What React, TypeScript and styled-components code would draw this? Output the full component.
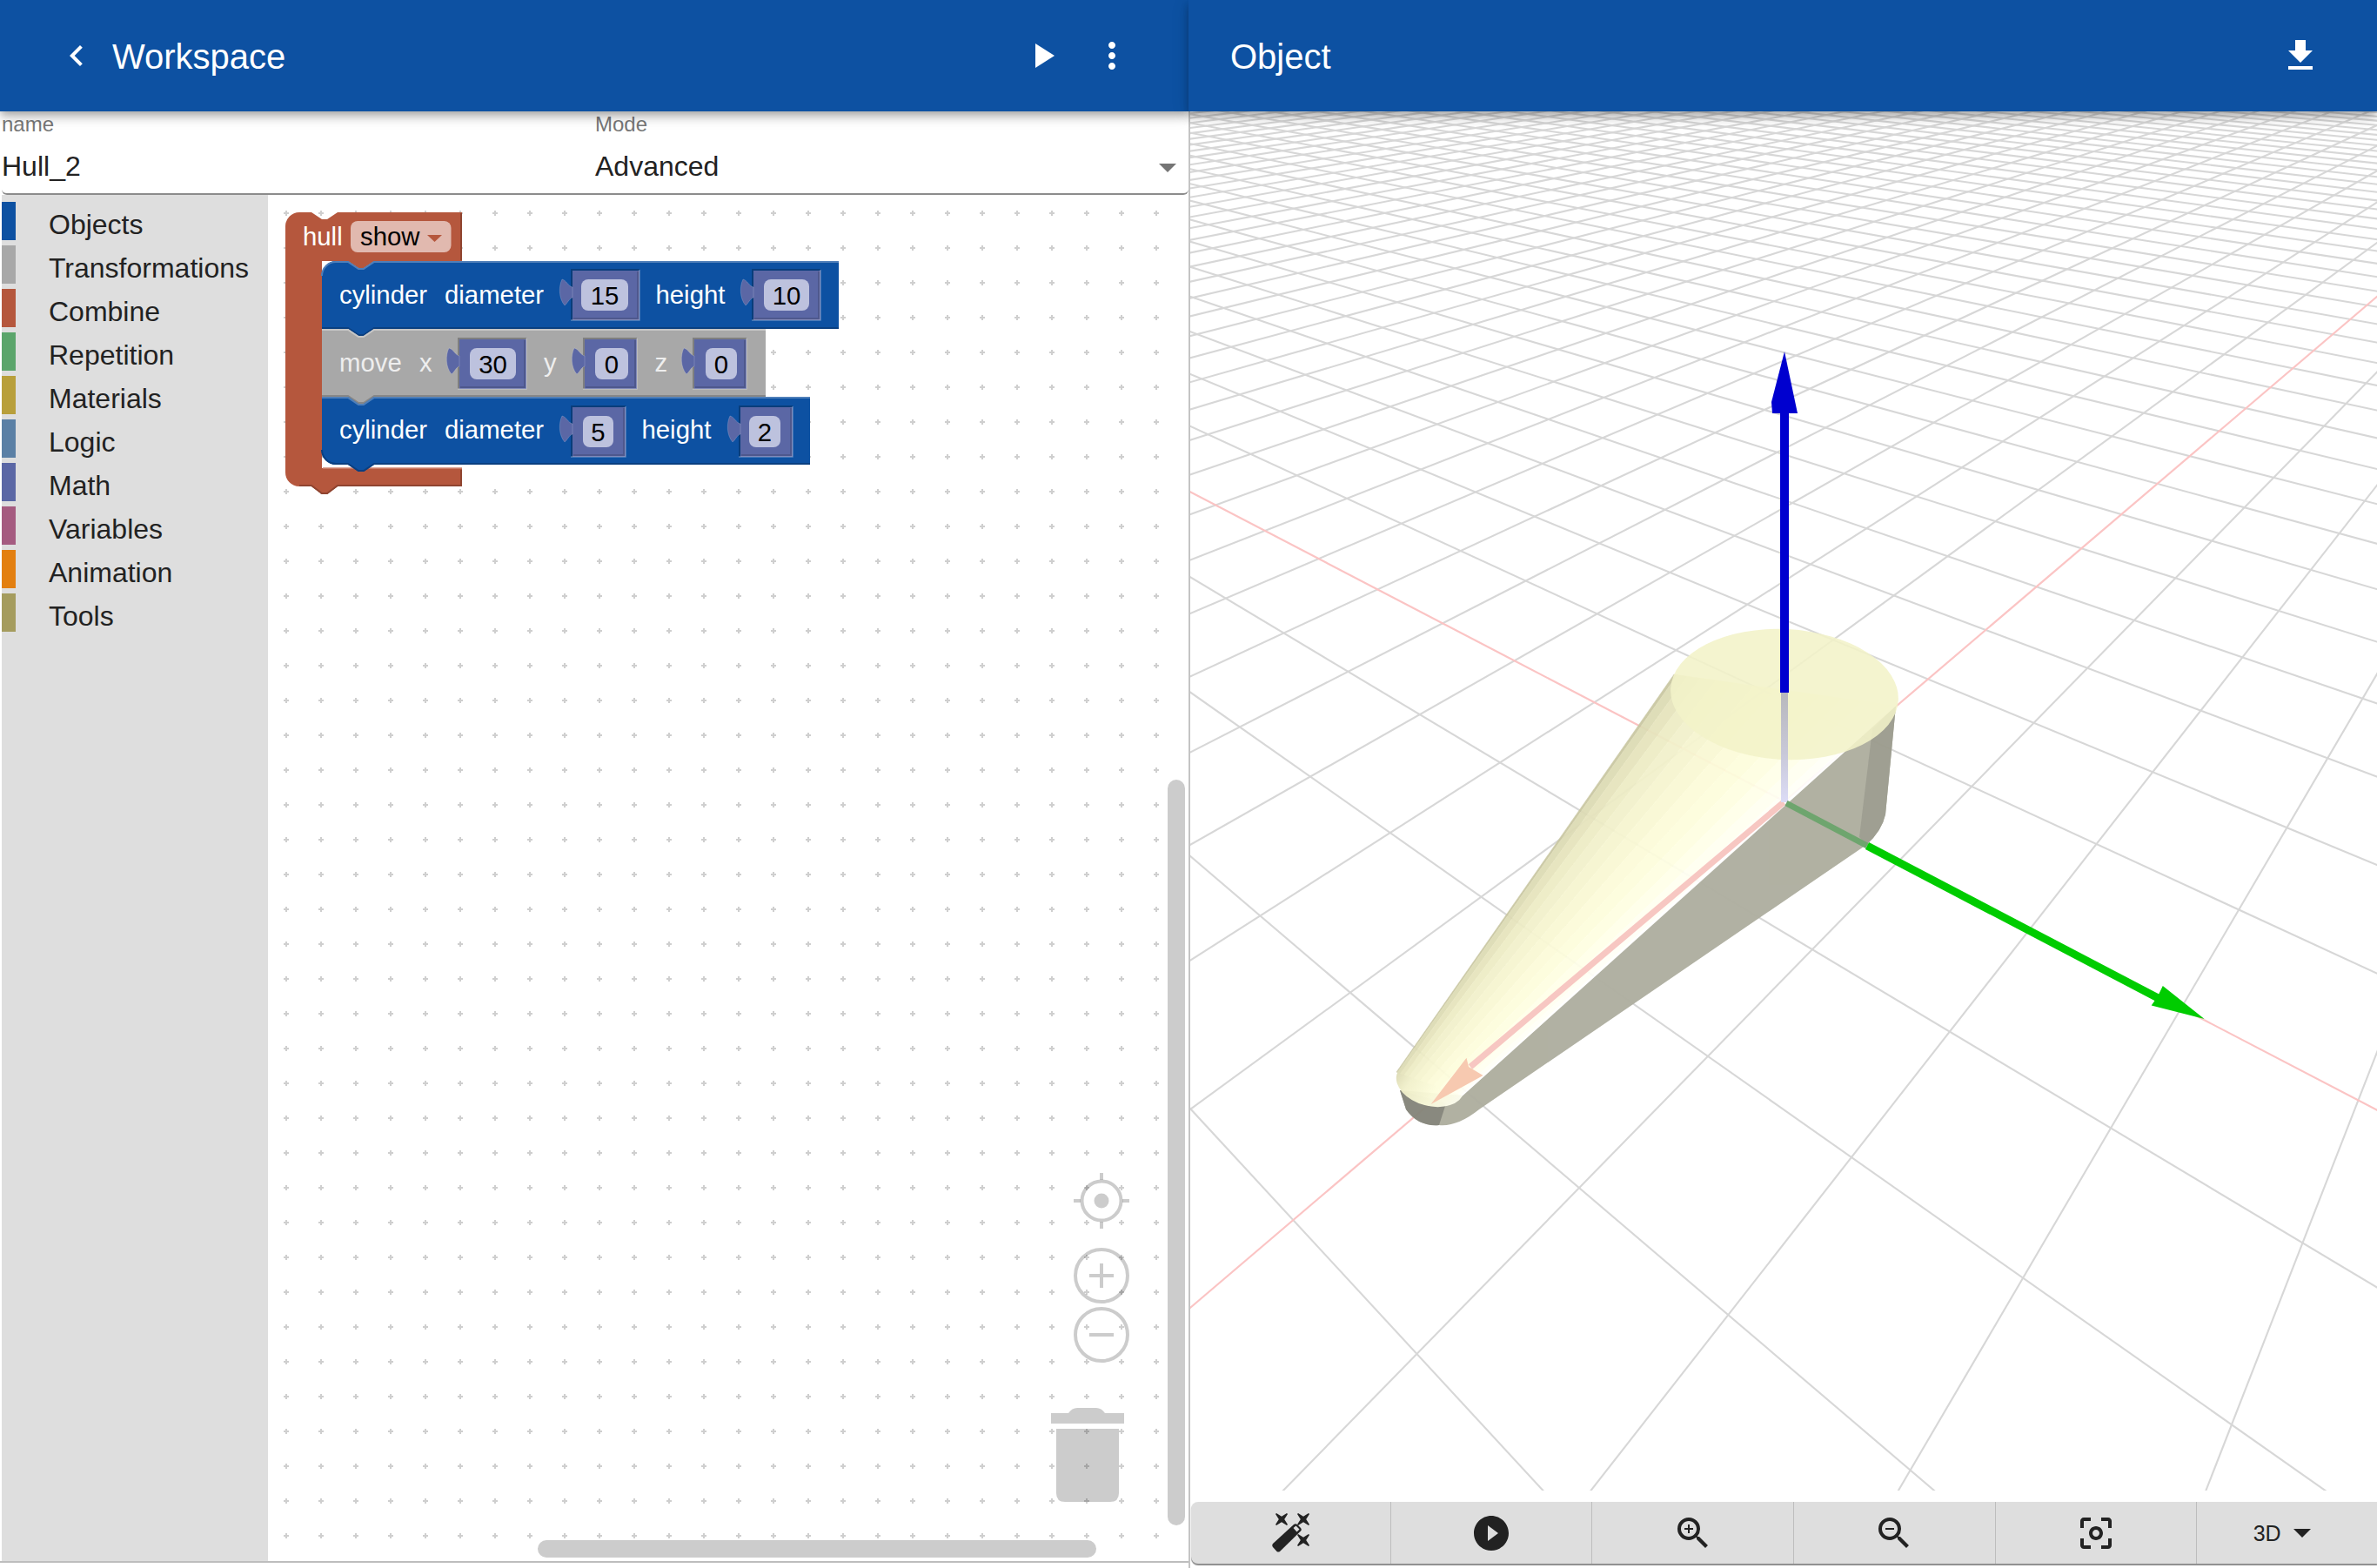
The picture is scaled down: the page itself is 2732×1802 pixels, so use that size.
import React from "react";
import styled, { createGlobalStyle } from "styled-components";
import {
  MdChevronLeft,
  MdPlayArrow,
  MdMoreVert,
  MdFileDownload,
  MdPlayCircleFilled,
  MdZoomIn,
  MdZoomOut,
  MdCenterFocusWeak,
} from "react-icons/md";

const FONT = `"Liberation Sans", Arial, sans-serif`;
const BLUE = "#0d51a2";

const Global = createGlobalStyle`
  html, body { margin: 0; padding: 0; background: #fff; overflow: hidden; }
  body { font-family: ${FONT}; }
  * { box-sizing: border-box; }
`;

const Page = styled.div`
  width: 2732px;
  height: 1802px;
  display: grid;
  grid-template-columns: 1366px 1366px;
  background: #fff;
`;

/* ---------- Left panel ---------- */
const LeftPanel = styled.section`
  height: 1796px;
  display: flex;
  flex-direction: column;
  border-bottom: 2px solid #bdbdbd;
  min-width: 0;
`;

const AppBar = styled.header<{ $z: number; $left: number; $right: number }>`
  position: relative;
  z-index: ${(p) => p.$z};
  flex: none;
  height: 128px;
  display: flex;
  align-items: center;
  padding: 0 ${(p) => p.$right}px 0 ${(p) => p.$left}px;
  background: ${BLUE};
  color: #fff;
  box-shadow: 0 4px 8px -2px rgba(0, 0, 0, 0.2), 0 8px 10px 0 rgba(0, 0, 0, 0.14),
    0 2px 20px 0 rgba(0, 0, 0, 0.12);
`;

const BarTitle = styled.h1<{ $gap?: number }>`
  flex: 1;
  margin: 2px 0 0 ${(p) => p.$gap ?? 0}px;
  font: 400 40px/48px ${FONT};
`;

const BarIcon = styled.span<{ $gap?: number }>`
  display: flex;
  width: 48px;
  height: 48px;
  margin-left: ${(p) => p.$gap ?? 0}px;
  svg { width: 48px; height: 48px; display: block; }
`;

const FormRow = styled.div`
  flex: none;
  height: 96px;
  margin-left: 2px;
  display: grid;
  grid-template-columns: 682px 1fr;
  border-bottom: 2px solid #8c8c8c;
  border-bottom-left-radius: 6px;
  border-bottom-right-radius: 6px;
`;

const Field = styled.div`
  display: flex;
  flex-direction: column;
  padding-top: 1px;
  min-width: 0;
`;

const FieldLabel = styled.span`
  font: 400 24px/28px ${FONT};
  color: #777;
`;

const FieldValue = styled.div`
  display: flex;
  align-items: center;
  justify-content: space-between;
  margin-top: 16px;
  font: 400 32px/37px ${FONT};
  color: #222;
`;

const Caret = styled.i`
  display: block;
  width: 0;
  height: 0;
  margin: 2px 14px 0 0;
  border-left: 10px solid transparent;
  border-right: 10px solid transparent;
  border-top: 10px solid #757575;
`;

const Workspace = styled.div`
  flex: 1;
  min-height: 0;
  display: flex;
`;

const Toolbox = styled.nav`
  flex: none;
  width: 306px;
  margin-left: 2px;
  padding-top: 8px;
  background: #dedede;
  display: flex;
  flex-direction: column;
  gap: 6px;
`;

const ToolRow = styled.div`
  height: 44px;
  display: flex;
  align-items: flex-start;
  font: 400 32px/44px ${FONT};
  color: #222;
`;

const ToolSwatch = styled.i<{ $color: string }>`
  width: 16px;
  height: 44px;
  margin-right: 38px;
  background: ${(p) => p.$color};
`;

const ToolName = styled.span`
  margin-top: 4px;
`;

const Canvas = styled.div`
  position: relative;
  flex: 1;
  min-width: 0;
  overflow: hidden;
  background: #fff;
`;

const BlocklySvg = styled.svg`
  position: absolute;
  inset: 0;
  width: 100%;
  height: 100%;
`;

const BlockText = styled.text<{ $fill?: string; $anchor?: string }>`
  font: 400 29.33px ${FONT};
  fill: ${(p) => p.$fill ?? "#fff"};
  text-anchor: ${(p) => p.$anchor ?? "start"};
`;

const VScroll = styled.div`
  position: absolute;
  left: 1034px;
  top: 672px;
  width: 20px;
  height: 857px;
  border-radius: 10px;
  background: #ccc;
`;

const HScroll = styled.div`
  position: absolute;
  left: 310px;
  top: 1546px;
  width: 642px;
  height: 20px;
  border-radius: 10px;
  background: #ccc;
`;

/* ---------- Right panel ---------- */
const RightPanel = styled.section`
  height: 1802px;
  display: flex;
  flex-direction: column;
  border-left: 2px solid #c4c4c4;
  min-width: 0;
`;

const ViewerBar = styled(AppBar)`
  margin-left: -2px;
`;

const Viewport = styled.div`
  flex: none;
  height: 1585px;
  overflow: hidden;
`;

const SceneSvg = styled.svg`
  display: block;
  width: 1364px;
  height: 1585px;
`;

const GridLines = styled.g`
  filter: blur(0.55px);
`;

const ViewToolbar = styled.div`
  flex: none;
  height: 71px;
  margin: 13px 0 0 1px;
  display: flex;
  background: #dedede;
  border-radius: 8px 0 0 8px;
  box-shadow: 0 2px 1px #8c8c8c;
`;

const ToolButton = styled.div<{ $width: number }>`
  flex: none;
  width: ${(p) => p.$width}px;
  height: 100%;
  display: flex;
  align-items: center;
  justify-content: center;
  color: #222;
  border-right: 1.5px solid #bdbdbd;
  svg { width: 48px; height: 48px; display: block; flex: none; }
`;

const ModeButton = styled.div`
  flex: 1;
  height: 100%;
  display: flex;
  align-items: center;
  justify-content: center;
  gap: 14px;
  padding-right: 12px;
  color: #222;
  font: 400 25px/30px ${FONT};
`;

const ModeCaret = styled.i`
  display: block;
  width: 0;
  height: 0;
  border-left: 10.5px solid transparent;
  border-right: 10.5px solid transparent;
  border-top: 10px solid #222;
`;

/* ---------- Toolbox data ---------- */
const TOOLS: [string, string][] = [
  ["Objects", "#0d51a2"],
  ["Transformations", "#a8a8a8"],
  ["Combine", "#b5573d"],
  ["Repetition", "#5ba56b"],
  ["Materials", "#b89f3b"],
  ["Logic", "#5b80a5"],
  ["Math", "#5b67a5"],
  ["Variables", "#a55b80"],
  ["Animation", "#e37f10"],
  ["Tools", "#a59c5e"],
];

/* ---------- Blockly drawing ---------- */
const SLOT = "#5b67a5";
const FIELD = "#bdc2de";

function Slot(p: { main: number; right: number; top: number; fl: number; fr: number; text: string }) {
  const { main, right, top, fl, fr, text } = p;
  const bottom = top + 57;
  return (
    <g>
      <rect x={main} y={top} width={right - main} height={57} fill={SLOT} />
      <path d={`M${main - 1},${bottom} V${top - 1} H${right}`} fill="none" stroke="rgba(0,0,0,.24)" strokeWidth="2" />
      <path d={`M${right},${top - 1} V${bottom} H${main - 2}`} fill="none" stroke="rgba(255,255,255,.3)" strokeWidth="1.5" />
      <path d={`M${right - 2},${top + 1} V${bottom - 2} H${main + 1}`} fill="none" stroke="rgba(0,0,0,.14)" strokeWidth="2" />
      <path
        d={`M${main},${top + 19} C${main - 5},${top + 18} ${main - 7},${top + 11} ${main - 12},${top + 10} C${main - 16},${top + 18} ${main - 16},${top + 32} ${main - 9},${top + 40} C${main - 6},${top + 38} ${main - 4},${top + 32} ${main},${top + 31} Z`}
        fill={SLOT}
        stroke="rgba(255,255,255,.18)"
        strokeWidth="1"
      />
      <rect x={fl} y={top + 10} width={fr - fl} height={36} rx={8} fill={FIELD} />
      <BlockText x={(fl + fr) / 2} y={top + 38.5} $fill="#000" $anchor="middle">{text}</BlockText>
    </g>
  );
}

function StackBlock(p: {
  y: number; h: number; right: number; color: string; light: string; dark: string;
  roundTop?: boolean; roundBottom?: boolean; children?: React.ReactNode;
}) {
  const { y, h, right, color, light, dark, roundTop, roundBottom, children } = p;
  const x = 370;
  const b = y + h;
  const topEdge = `${roundTop ? `M${x},${y + 16} A16,16 0 0 1 ${x + 16},${y}` : `M${x},${y}`} L400,${y} l12,8 l6,0 l12,-8 L${right},${y}`;
  const botEdge = `M${right},${b} L430,${b} l-12,8 l-6,0 l-12,-8 ${roundBottom ? `L${x + 16},${b} A16,16 0 0 1 ${x},${b - 16}` : `L${x},${b}`}`;
  const shape = `${roundTop ? `M${x},${y + 16} A16,16 0 0 1 ${x + 16},${y}` : `M${x},${y}`} L400,${y} l12,8 l6,0 l12,-8 L${right},${y} L${right},${b} L430,${b} l-12,8 l-6,0 l-12,-8 ${roundBottom ? `L${x + 16},${b} A16,16 0 0 1 ${x},${b - 16}` : `L${x},${b}`} Z`;
  return (
    <g>
      <path d={shape} fill={color} />
      <path d={topEdge} transform="translate(0,1)" fill="none" stroke={light} strokeWidth="2" />
      <path d={botEdge} transform="translate(0,-1)" fill="none" stroke={dark} strokeWidth="2" />
      {children}
    </g>
  );
}

function BlocklyDrawing() {
  const vb = "308 224 1058 1570";
  return (
    <BlocklySvg viewBox={vb}>
      <defs>
        <pattern id="dots" x="309" y="225" width="40" height="40" patternUnits="userSpaceOnUse">
          <path d="M17,20h6M20,17v6" stroke="#cfcfcf" strokeWidth="2" fill="none" />
        </pattern>
      </defs>
      <rect x="308" y="224" width="1058" height="1570" fill="url(#dots)" />

      {/* hull statement block */}
      <path
        d="M328,260 A16,16 0 0 1 344,244 L358,244 l12,8 l6,0 l12,-8 L531,244 L531,300 L430,300 l-12,8 l-6,0 l-12,-8 L370,300 L370,538 L531,538 L531,559 L388,559 l-12,9 l-6,0 l-12,-9 L344,559 A16,16 0 0 1 328,543 Z"
        fill="#b5573d"
      />
      <path d="M530,245V299M530,540V558H388l-12,9h-6l-12,-9H344" fill="none" stroke="#8f4430" strokeWidth="2" />
      <path d="M371,538H531" fill="none" stroke="#cf8470" strokeWidth="1.5" />
      <BlockText x="348" y="282">hull</BlockText>
      <rect x="403" y="254" width="115.5" height="36" rx="8" fill="#e1b9af" />
      <BlockText x="414" y="282" $fill="#000">show</BlockText>
      <path d="M491,270H508L499.5,278Z" fill="#b5573d" />

      <StackBlock y={300} h={78} right={964} color={BLUE} light="#4f7fb9" dark="#0a3f80" roundTop>
        <BlockText x="390" y="349">cylinder</BlockText>
        <BlockText x="511" y="349">diameter</BlockText>
        <Slot main={658} right={735} top={311} fl={668} fr={722} text="15" />
        <BlockText x="753.5" y="349">height</BlockText>
        <Slot main={866} right={943} top={311} fl={878} fr={930} text="10" />
      </StackBlock>

      <StackBlock y={378} h={78} right={880} color="#a8a8a8" light="#c6c6c6" dark="#878787">
        <BlockText x="390" y="427" $fill="#eee">move</BlockText>
        <BlockText x="482" y="427" $fill="#eee">x</BlockText>
        <Slot main={528} right={605} top={390} fl={540} fr={593} text="30" />
        <BlockText x="625" y="427" $fill="#eee">y</BlockText>
        <Slot main={672} right={732} top={390} fl={684} fr={722} text="0" />
        <BlockText x="752.5" y="427" $fill="#eee">z</BlockText>
        <Slot main={798} right={858} top={390} fl={811} fr={847} text="0" />
      </StackBlock>

      <StackBlock y={456} h={78} right={931} color={BLUE} light="#4f7fb9" dark="#0a3f80" roundBottom>
        <BlockText x="390" y="504">cylinder</BlockText>
        <BlockText x="511" y="504">diameter</BlockText>
        <Slot main={658} right={719} top={468} fl={670} fr={705} text="5" />
        <BlockText x="737.5" y="504">height</BlockText>
        <Slot main={851} right={911} top={468} fl={861} fr={897} text="2" />
      </StackBlock>

      {/* workspace controls */}
      <g fill="none" stroke="rgba(0,0,0,.2)" strokeWidth="4">
        <circle cx="1266" cy="1380" r="22.5" />
        <path d="M1266,1348v8M1266,1404v8M1234,1380h8M1290,1380h8" />
        <circle cx="1266" cy="1466" r="30" />
        <path d="M1252,1466h28M1266,1452v28" />
        <circle cx="1266" cy="1534" r="30" />
        <path d="M1252,1534h28" />
      </g>
      <circle cx="1266" cy="1380" r="8.5" fill="rgba(0,0,0,.2)" />
      <path
        d="M1208,1624H1228Q1232,1618 1238,1618H1260Q1266,1618 1270,1624H1292V1636H1208ZM1214,1642H1286V1716Q1286,1726 1276,1726H1224Q1214,1726 1214,1716Z"
        fill="rgba(0,0,0,.2)"
      />
    </BlocklySvg>
  );
}

/* ---------- 3D scene ---------- */
const O = { x: 2051, y: 921 };
const VU = { x: 3240, y: -92 };
const VV = { x: 106, y: -92 };
const LU = -0.0805;
const LV = -0.0633;

function project(u: number, v: number) {
  const a = LU * u;
  const b = LV * v;
  const w = a + b + 1;
  return { x: (a * VU.x + b * VV.x + O.x) / w, y: (a * VU.y + b * VV.y + O.y) / w };
}

function gridSegments() {
  const lines: { d: string; axis: boolean; key: string }[] = [];
  for (let i = -90; i <= 24; i++) {
    const end = (1 + LU * i - 0.03) / -LV;
    const p0 = project(i, -260);
    const p1 = project(i, end);
    lines.push({ key: `u${i}`, axis: i === 0, d: `M${p0.x.toFixed(1)},${p0.y.toFixed(1)}L${p1.x.toFixed(1)},${p1.y.toFixed(1)}` });
    const endU = (1 + LV * i - 0.03) / -LU;
    const q0 = project(-260, i);
    const q1 = project(endU, i);
    lines.push({ key: `v${i}`, axis: i === 0, d: `M${q0.x.toFixed(1)},${q0.y.toFixed(1)}L${q1.x.toFixed(1)},${q1.y.toFixed(1)}` });
  }
  return lines;
}

const FACET_COLORS = [
  "#c9c7a2", "#dddbb4", "#e6e4bd", "#edecc5", "#f2f1cb", "#f6f5d0", "#f9f8d4", "#fcfbd9",
  "#fdfddc", "#fefee2", "#ffffe9", "#fffff1", "#fffff7", "#ffffff",
];

function facetPolys() {
  const T0 = { x: 1924, y: 775 };
  const T1 = { x: 2179, y: 811 };
  const B0 = { x: 1605, y: 1232 };
  const B1 = { x: 1681, y: 1259 };
  const mix = (a: { x: number; y: number }, b: { x: number; y: number }, t: number) =>
    `${(a.x + (b.x - a.x) * t).toFixed(1)},${(a.y + (b.y - a.y) * t).toFixed(1)}`;
  // narrow outer rim facets, wider ones toward the middle
  const stops = [0, 0.015, 0.06, 0.12, 0.19, 0.27, 0.36, 0.46, 0.56, 0.66, 0.76, 0.85, 0.93, 0.98, 1];
  return FACET_COLORS.map((c, i) => ({
    c,
    pts: `${mix(T0, T1, stops[i])} ${mix(T0, T1, stops[i + 1])} ${mix(B0, B1, stops[i + 1])} ${mix(B0, B1, stops[i])}`,
  }));
}

function Scene() {
  const lines = gridSegments();
  const facets = facetPolys();
  return (
    <SceneSvg viewBox="1368 128 1364 1585">
      <defs>
        <linearGradient id="tipCap" gradientUnits="userSpaceOnUse" x1="1605" y1="1232" x2="1684" y2="1260">
          <stop offset="0" stopColor="#d9d7b0" />
          <stop offset="0.25" stopColor="#f2f1cb" />
          <stop offset="0.6" stopColor="#fdfddc" />
          <stop offset="1" stopColor="#fffff4" />
        </linearGradient>
        <linearGradient id="zStem" gradientUnits="userSpaceOnUse" x1="2051" y1="795" x2="2051" y2="922">
          <stop offset="0" stopColor="#b8b8bc" />
          <stop offset="0.55" stopColor="#c8c8d8" />
          <stop offset="1" stopColor="#dcdcf6" />
        </linearGradient>
      </defs>

      <GridLines>
        {lines.filter((l) => !l.axis).map((l) => (
          <path key={l.key} d={l.d} stroke="#d7d7d7" strokeWidth="2.1" fill="none" />
        ))}
        {lines.filter((l) => l.axis).map((l) => (
          <path key={l.key} d={l.d} stroke="#fbc4c4" strokeWidth="2.2" fill="none" />
        ))}
      </GridLines>

      {/* shaded side of the hull */}
      <g opacity="0.96">
        <path d="M2179,811 L2167,936 Q2163,955 2145,971 L1700,1275 Q1675,1295 1654,1293 Q1630,1295 1616,1275 L1609,1253 L1681,1259 L2054,923 Z" fill="#aeae9f" />
        <path d="M2179,811 L2167,936 Q2163,955 2145,971 L2137,962 L2152,838 Z" fill="#9c9c8e" />
        <path d="M1609,1253 L1616,1275 Q1630,1295 1654,1293 L1662,1268 Z" fill="#85857a" />
      </g>

      {/* lit side */}
      <g opacity="0.94">
        <ellipse cx="1644" cy="1245" rx="40" ry="26" transform="rotate(15 1644 1245)" fill="url(#tipCap)" />
        {facets.map((f, i) => (
          <polygon key={i} points={f.pts} fill={f.c} stroke={f.c} strokeWidth="0.5" />
        ))}
      </g>
      <ellipse cx="2051" cy="798" rx="131" ry="75" transform="rotate(3 2051 798)" fill="#f2f2c8" opacity="0.88" />

      {/* red axis */}
      <path d="M2050,922L1690,1226" stroke="#f7c7c2" strokeWidth="7" fill="none" />
      <path d="M1644.6,1269L1685.5,1215.7L1688,1226L1704.6,1236Z" fill="#f7c9b0" />

      {/* blue axis */}
      <path d="M2051,795V922" stroke="url(#zStem)" strokeWidth="8" fill="none" />
      <path d="M2051,470V796" stroke="#0000cf" strokeWidth="10" fill="none" />
      <path d="M2051,404L2066,475H2037L2036,462Z" fill="#0000cf" />

      {/* green axis */}
      <path d="M2053,923L2146,972" stroke="#6ea56e" strokeWidth="7" fill="none" />
      <path d="M2146,972L2488,1151" stroke="#00cc00" strokeWidth="9" fill="none" />
      <path d="M2533.6,1171L2472.7,1155.5L2480,1145L2485.8,1133Z" fill="#00cc00" />
    </SceneSvg>
  );
}

function WandIcon() {
  const star = "M-6,-7L0,-3.2L6,-7L7,-6L3.2,0L7,6L6,7L0,3.2L-6,7L-7,6L-3.2,0L-7,-6Z";
  return (
    <svg viewBox="0 0 48 48">
      <path d={star} transform="translate(14,8)" fill="currentColor" />
      <path d={star} transform="translate(39,8)" fill="currentColor" />
      <path d={star} transform="translate(39,32)" fill="currentColor" />
      <path d="M4,36 L28,14 Q30,12.5 32,14 L36,18 Q37.5,20 36,21.5 L12,45 Q10,46 8.5,45 L4,40 Q2.5,38 4,36 Z" fill="currentColor" />
      <path d="M27.5,18 L30.5,15.5 L34.5,19.5 L31.5,22.5 Z" fill="#dedede" />
    </svg>
  );
}

export default function App() {
  return (
    <>
      <Global />
      <Page>
        <LeftPanel>
          <AppBar $z={2} $left={64} $right={64}>
            <BarIcon><MdChevronLeft /></BarIcon>
            <BarTitle $gap={17}>Workspace</BarTitle>
            <BarIcon><MdPlayArrow /></BarIcon>
            <BarIcon $gap={32}><MdMoreVert /></BarIcon>
          </AppBar>
          <FormRow>
            <Field>
              <FieldLabel>name</FieldLabel>
              <FieldValue>Hull_2</FieldValue>
            </Field>
            <Field>
              <FieldLabel>Mode</FieldLabel>
              <FieldValue>
                Advanced
                <Caret />
              </FieldValue>
            </Field>
          </FormRow>
          <Workspace>
            <Toolbox>
              {TOOLS.map(([name, color]) => (
                <ToolRow key={name}>
                  <ToolSwatch $color={color} />
                  <ToolName>{name}</ToolName>
                </ToolRow>
              ))}
            </Toolbox>
            <Canvas>
              <BlocklyDrawing />
              <VScroll />
              <HScroll />
            </Canvas>
          </Workspace>
        </LeftPanel>
        <RightPanel>
          <ViewerBar $z={3} $left={48} $right={64}>
            <BarTitle>Object</BarTitle>
            <BarIcon><MdFileDownload /></BarIcon>
          </ViewerBar>
          <Viewport>
            <Scene />
          </Viewport>
          <ViewToolbar>
            <ToolButton $width={229.5}><WandIcon /></ToolButton>
            <ToolButton $width={231.7}><MdPlayCircleFilled /></ToolButton>
            <ToolButton $width={231.7}><MdZoomIn /></ToolButton>
            <ToolButton $width={231.7}><MdZoomOut /></ToolButton>
            <ToolButton $width={231.7}><MdCenterFocusWeak /></ToolButton>
            <ModeButton>
              3D
              <ModeCaret />
            </ModeButton>
          </ViewToolbar>
        </RightPanel>
      </Page>
    </>
  );
}
